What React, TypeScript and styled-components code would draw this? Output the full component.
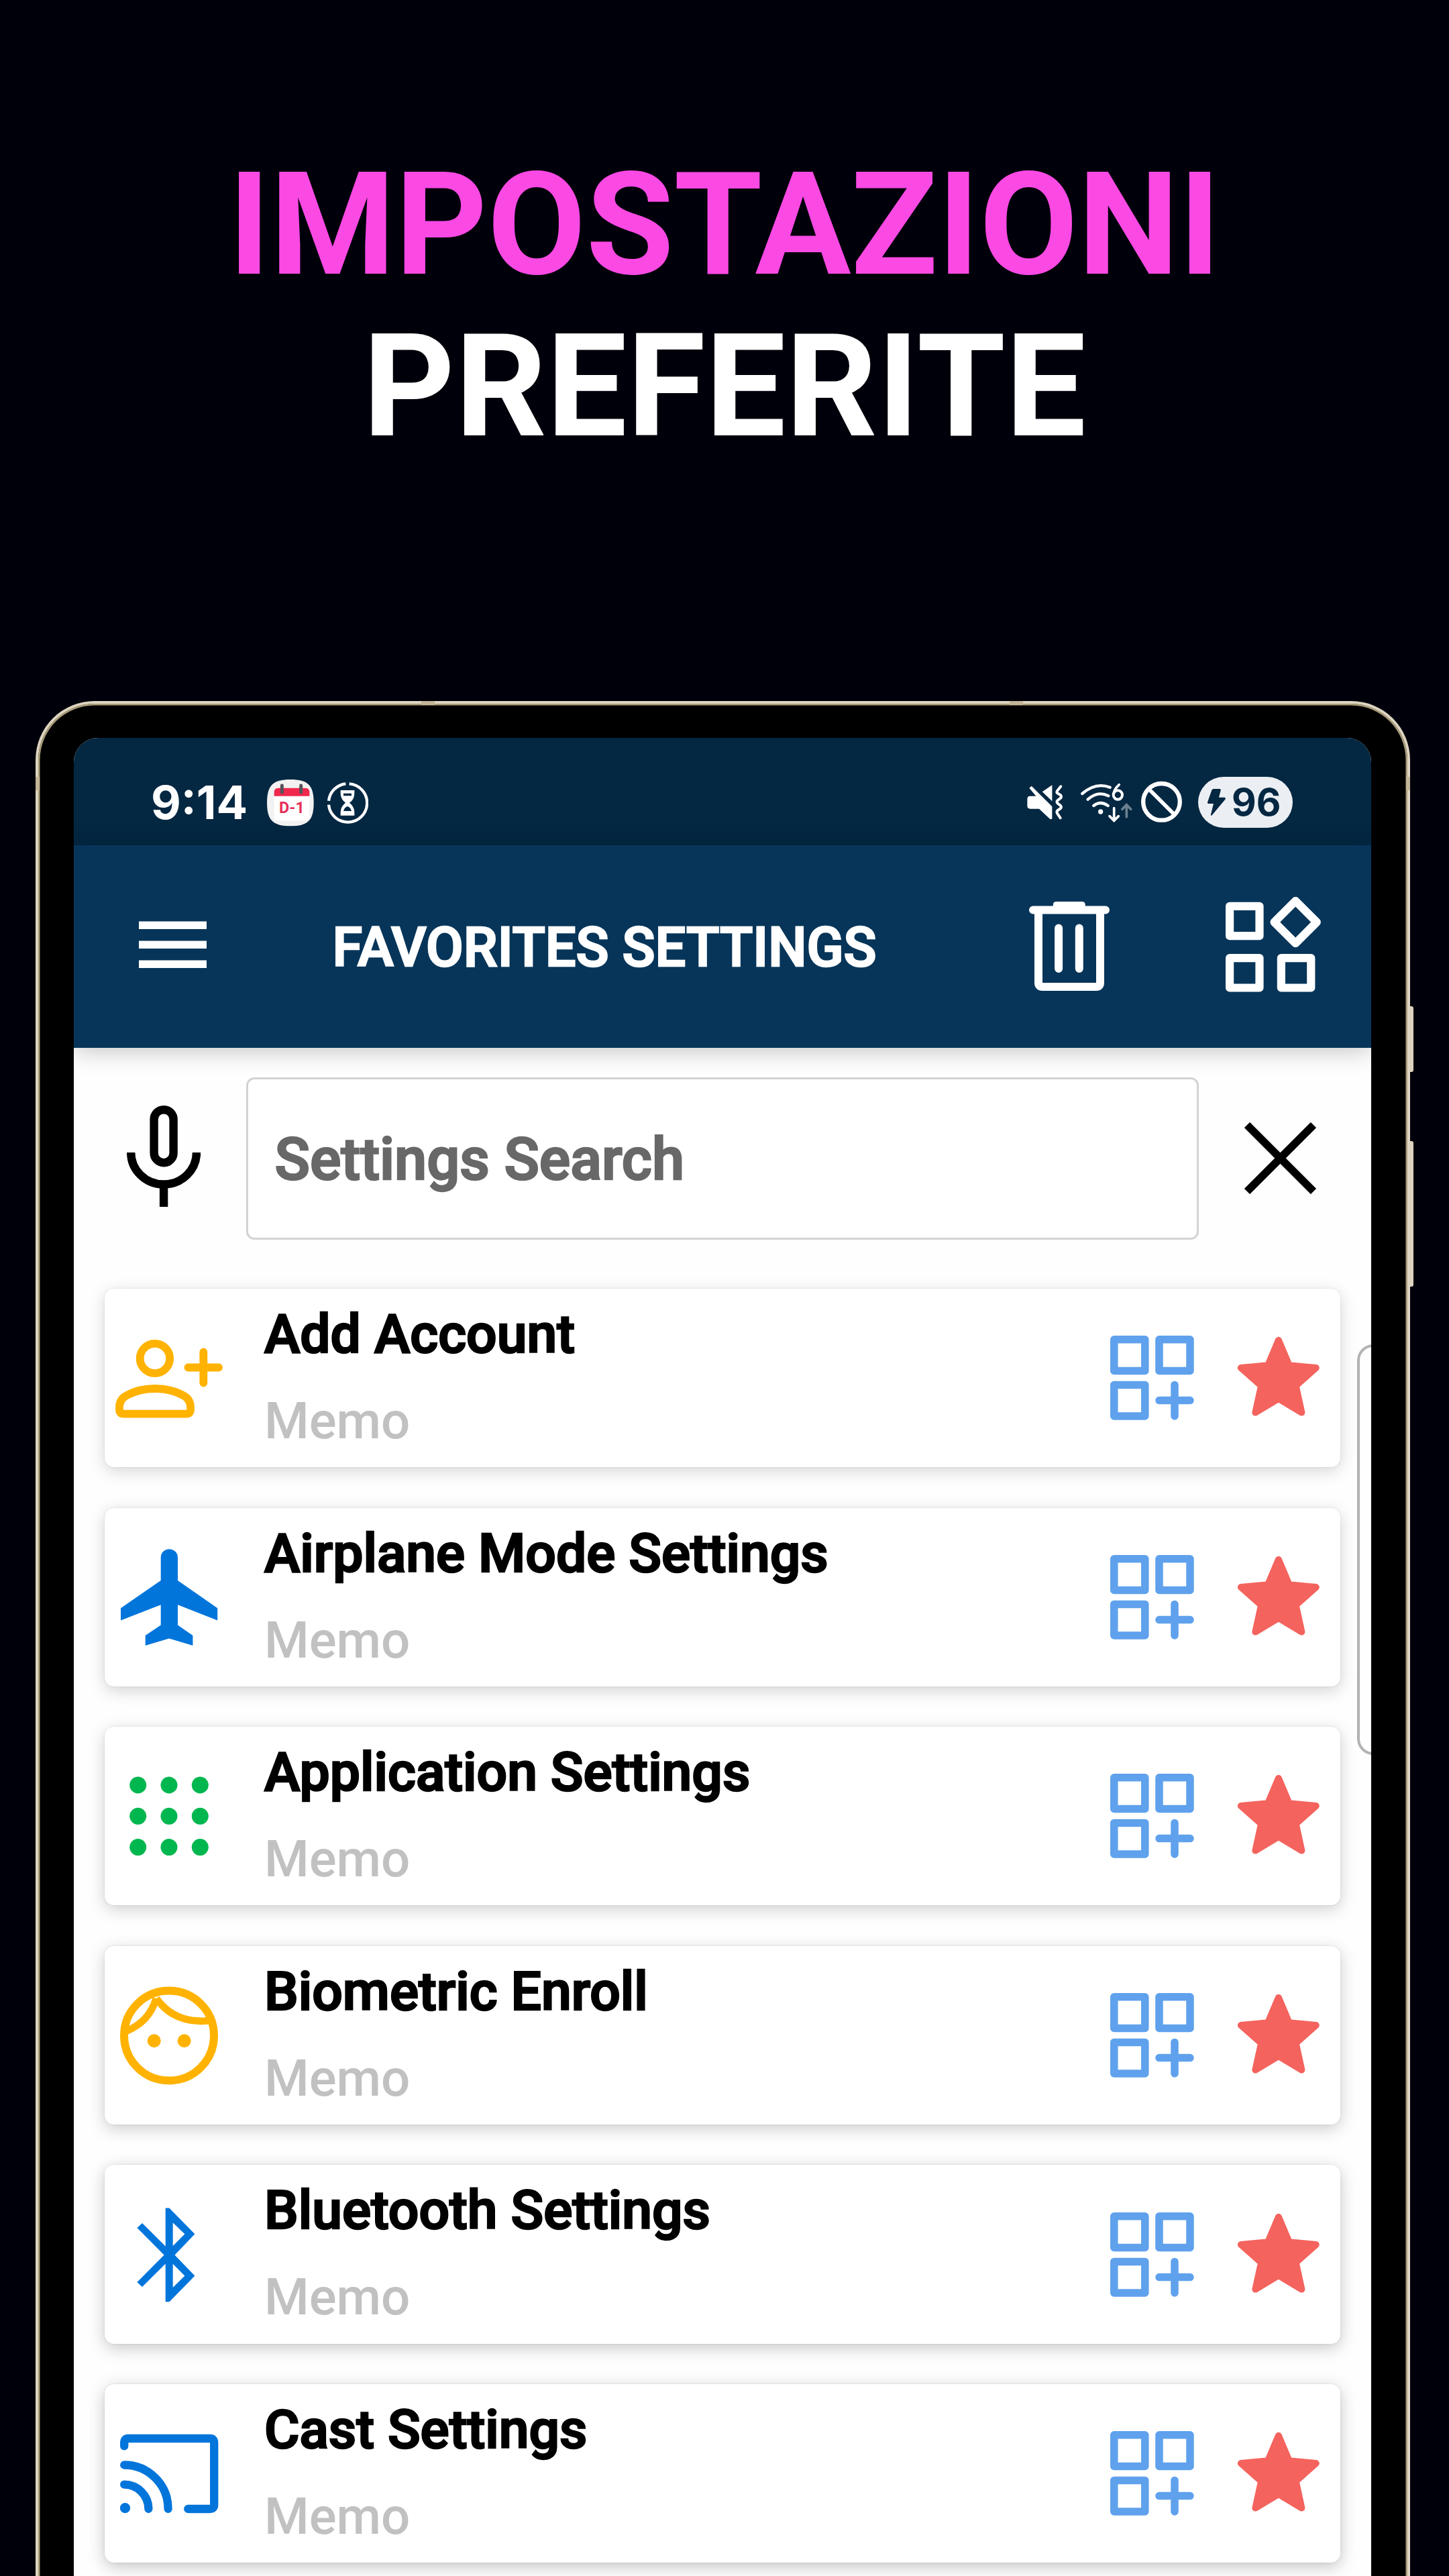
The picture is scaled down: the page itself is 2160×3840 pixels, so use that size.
import type { ReactNode } from 'react';
import { createGlobalStyle, styled } from 'styled-components';

const GlobalStyle = createGlobalStyle`
  * {
    box-sizing: border-box;
  }

  body {
    margin: 0;
    background: #00000b;
    font-family: Roboto, 'Noto Sans', sans-serif;
  }

  svg {
    display: block;
    flex: none;
  }
`;

const Page = styled.main`
  display: flex;
  flex-direction: column;
  width: 2160px;
  height: 3840px;
  overflow: hidden;
`;

const Hero = styled.h1`
  flex: none;
  height: 1045px;
  margin: 0;
  padding-top: 215px;
  color: #fff;
  font-size: 213px;
  font-weight: 700;
  line-height: 241px;
  text-align: center;
`;

const HeroLine = styled.span<{ $color?: string }>`
  display: block;
  color: ${({ $color }) => $color ?? 'inherit'};
`;

const Phone = styled.section`
  position: relative;
  flex: none;
  width: 2049px;
  height: 2900px;
  margin-left: 53px;
  padding: 51px 54px 0 53px;
  border: 4px solid #ddd5c0;
  border-bottom: 0;
  border-radius: 88px 88px 0 0;
  background: #000;
  box-shadow: inset 0 0 0 2.5px #aa9c79;
`;

const SideButton = styled.i<{ $top: number; $height: number }>`
  position: absolute;
  top: ${({ $top }) => $top}px;
  right: -9px;
  width: 5px;
  height: ${({ $height }) => $height}px;
  border-radius: 0 3px 3px 0;
  background: #ddd3bf;
`;

const Antenna = styled.i<{ $side: 'left' | 'right' | 'top'; $offset: number }>`
  position: absolute;
  ${({ $side }) => $side}: -4px;
  ${({ $side, $offset }) => ($side === 'top' ? `left: ${$offset}px` : `top: ${$offset}px`)};
  width: ${({ $side }) => ($side === 'top' ? 20 : 6)}px;
  height: ${({ $side }) => ($side === 'top' ? 6 : 20)}px;
  background: #c3b597;
`;

const Screen = styled.div`
  position: relative;
  height: 100%;
  border-radius: 36px 36px 0 0;
  background: #fefefe;
  overflow: hidden;
`;

const StatusBar = styled.div`
  display: flex;
  align-items: center;
  justify-content: space-between;
  height: 160px;
  padding: 31px 117px 0 115px;
  background: #042742;
`;

const StatusGroup = styled.div<{ $gap: number }>`
  display: flex;
  align-items: center;
  gap: ${({ $gap }) => $gap}px;
`;

const Clock = styled.span`
  width: 153.5px;
  color: #fff;
  font-family: Inter, sans-serif;
  font-size: 69px;
  font-weight: 700;
  line-height: 76px;
  white-space: nowrap;
`;

const Battery = styled.span`
  display: flex;
  align-items: center;
  width: 141px;
  height: 76px;
  margin-left: 10px;
  padding-left: 14px;
  gap: 9px;
  border-radius: 38px;
  background: #ebeff3;
  color: #042742;
  font-family: Inter, sans-serif;
  font-size: 56.5px;
  font-weight: 700;
`;

const AppBar = styled.header`
  position: relative;
  display: flex;
  align-items: center;
  height: 301.5px;
  padding: 0 75px 5px 97px;
  background: #073559;
  box-shadow: 0 4px 34px rgba(0, 0, 0, 0.24);
`;

const AppTitle = styled.h2`
  flex: 1;
  margin: 0;
  padding: 8px 0 0 187.5px;
  color: #fff;
  font-size: 80.9px;
  font-weight: 500;
  white-space: nowrap;
  -webkit-text-stroke: 2.6px currentColor;
`;

const AppActions = styled.div`
  display: flex;
  align-items: center;
  gap: 173px;
`;

const SearchRow = styled.div`
  display: flex;
  align-items: center;
  height: 330px;
  padding: 0 82px 0 79px;
`;

const SearchField = styled.div`
  flex: none;
  display: flex;
  align-items: center;
  width: 1420px;
  height: 242px;
  margin: 0 68px;
  padding: 3px 0 0 39.5px;
  border: 3px solid #d3d3d3;
  border-radius: 12px;
  background: #fff;
  color: #686868;
  font-size: 86.6px;
  font-weight: 500;
  -webkit-text-stroke: 2.6px currentColor;
`;

const List = styled.ul`
  display: flex;
  flex-direction: column;
  gap: 60.3px;
  margin: 0;
  padding: 29.5px 46px 0;
  list-style: none;
`;

const Card = styled.li<{ $shade: number }>`
  display: flex;
  align-items: center;
  height: 266.3px;
  padding: 0 30px 0 16px;
  border-radius: 14px;
  background: #fff;
  box-shadow:
    0 6px 24px rgba(0, 0, 0, ${({ $shade }) => $shade}),
    0 0 3px rgba(0, 0, 0, 0.1);
`;

const CardText = styled.div`
  flex: 1;
  height: 100%;
  padding: 8px 0 0 62px;
  white-space: nowrap;
`;

const CardTitle = styled.div`
  color: #000;
  font-size: 80.4px;
  font-weight: 500;
  line-height: 120px;
  -webkit-text-stroke: 2.6px currentColor;
`;

const Memo = styled.div`
  margin-top: 9px;
  color: #c1c1c1;
  font-size: 76.3px;
  font-weight: 500;
  line-height: 120px;
`;

const CardActions = styled.div`
  display: flex;
  align-items: center;
  gap: 64px;
`;

const EdgeHandle = styled.i`
  position: absolute;
  top: 904px;
  right: -40px;
  width: 61px;
  height: 612px;
  border: 4px solid #b2b2b2;
  border-radius: 24px;
  background: #fefefe;
`;

const MenuIcon = () => (
  <svg width="101" height="70" viewBox="0 -0.5 101 70" fill="#fff">
    <path d="M0 0h101v11.6H0zM0 29h101v11.6H0zM0 58h101v11.6H0z" />
  </svg>
);

const TrashIcon = () => (
  <svg width="120" height="138" viewBox="0 -5 120 138" fill="none" stroke="#fff" strokeWidth="12" strokeLinecap="round">
    <path d="M6 12.5h108M14 14v107q0 6 6 6h80q6 0 6-6V14" />
    <path d="M44.1 39.5V100M74.8 39.5V100" />
    <path d="M35.8 10V5q0-5 5-5h38q5 0 5 5v5z" fill="#fff" stroke="none" />
  </svg>
);

const WidgetsIcon = () => (
  <svg width="142" height="142" viewBox="0 0 142 142" fill="none" stroke="#fff" strokeWidth="12.2" strokeLinejoin="round">
    <path d="M6.1 13.8h44.4v44.4H6.1zM6.1 91.1h44.4v44.4H6.1zM82.9 91.1h44.4v44.4H82.9z" />
    <path d="M104.2 6 135.8 37.6 104.2 69.2 72.6 37.6z" />
  </svg>
);

const MicIcon = () => (
  <svg width="110" height="158" viewBox="0 0 110 158" fill="none" stroke="#000" strokeWidth="12.4">
    <rect x="40.6" y="6.2" width="29" height="79" rx="14.5" />
    <path d="M6.2 70a48.9 47.5 0 0 0 97.8 0M55.1 117v34" />
  </svg>
);

const CloseIcon = () => (
  <svg width="107" height="107" viewBox="0 0 107 107" stroke="#000" strokeWidth="11.6">
    <path d="m4 4 99 99M103 4 4 103" />
  </svg>
);

const AddWidgetIcon = () => (
  <svg width="125" height="126" viewBox="0 0 125 126" fill="none" stroke="#5fa1ec" strokeWidth="11.5">
    <path
      d="M5.8 5.8h46v46.6h-46zM73 5.8h46v46.6H73zM5.8 73.4h46V120h-46z"
      strokeLinejoin="round"
    />
    <path d="M96 73.4V120M73 96.6h46" strokeLinecap="round" />
  </svg>
);

const StarIcon = () => (
  <svg width="124" height="124" viewBox="0 0 124 124" fill="#f4635d" stroke="#f4635d" strokeWidth="10" strokeLinejoin="round">
    <path d="M61.9 5.8 77.7 43.2 117.8 47.1 87.7 73.8 96.4 113.6 61.9 92.9 27.4 113.6 36.1 73.8 5.9 47.1 46.1 43.2z" />
  </svg>
);

/* 160x160 leading icons of the cards */
const RowIcon = ({ children }: { children: ReactNode }) => (
  <svg width="160" height="160" viewBox="0 0 160 160" fill="none">
    {children}
  </svg>
);

const AddAccountIcon = () => (
  <RowIcon>
    <g stroke="#ffb300" strokeWidth="11.8" strokeLinecap="round">
      <circle cx="58.9" cy="51" r="22.2" />
      <path d="M12 133.6h94q6 0 6-6V124c0-9-4-14.500-11-18-13-7-28-10-42-10s-29 3-42 10c-7 3.500-11 9-11 18v3.600q0 6 6 6z" />
      <path d="M131.3 41.5v46M108.500 64.500h45.500" />
    </g>
  </RowIcon>
);

const AirplaneIcon = () => (
  <RowIcon>
    <path
      fill="#0275db"
      d="M67.7 20.8a12.65 12.65 0 0 1 25.3 0V55l59.2 41.2v18.3L93 91.3v30.2l22.4 15.6V152L80 141.5 44.7 152v-14.9l23-15.6V91.3L8 114.5V96.2L67.7 55z"
    />
  </RowIcon>
);

const AppsIcon = () => (
  <RowIcon>
    <g fill="#00b74f">
      {[34, 80.3, 126.6].map((y) =>
        [33.7, 80, 126.3].map((x) => <circle key={`${x}-${y}`} cx={x} cy={y} r="12.5" />),
      )}
    </g>
  </RowIcon>
);

const FaceIcon = () => (
  <RowIcon>
    <g stroke="#ffb300" strokeWidth="12">
      <circle cx="80" cy="80.5" r="67" />
      <path d="M17 73.5Q51 59 60.8 25M61 25Q89 64 141 58" strokeWidth="10.8" />
    </g>
    <circle cx="57.7" cy="88.3" r="10" fill="#ffb300" />
    <circle cx="102.7" cy="88.3" r="10" fill="#ffb300" />
  </RowIcon>
);

const BluetoothIcon = () => (
  <RowIcon>
    <path
      fill="#0275db"
      fillRule="evenodd"
      d="M118.4 49.3 80.500 10.600h-5.800v57L40 32.900l-7.600 7L72.600 80.500l-40.200 40.400 7.600 7.200 34.700-34.700v56.900h5.800l37.900-38.700L88.500 80.500zM85.700 32.300l17.700 17-17.700 17.600zM85.700 93.800l17.700 17.800-17.700 17.300z"
    />
  </RowIcon>
);

const CastIcon = () => (
  <RowIcon>
    <g stroke="#0275db" strokeWidth="12.3" strokeLinecap="round">
      <path d="M13.2 39.3V34q0-6 6-6h122q6 0 6 6v93q0 6-6 6h-33" />
      <path d="M13.2 67.5A65.5 65.5 0 0 1 78.6 133M13.2 96.7A36.3 36.3 0 0 1 49.4 133" />
    </g>
    <circle cx="14.5" cy="131.7" r="7.6" fill="#0275db" />
  </RowIcon>
);

const CalendarBadge = () => (
  <svg width="70" height="76" viewBox="563 53 210 228">
    <path d="M668 65c78 0 104 26 104 104s-26 104-104 104-105-26-105-104 27-104 105-104z" fill="#f2f2f2" />
    <path d="M595 138h158v95q0 16-16 16H611q-16 0-16-16z" fill="#fff" />
    <path d="M595 139v-18q0-18 18-18h122q18 0 18 18v18z" fill="#f0284d" />
    <path d="M630 92v30M715 92v30" stroke="#56525a" strokeWidth="15" strokeLinecap="round" />
    <text x="674" y="215" fill="#e5305a" fontFamily="Roboto, sans-serif" fontSize="70" fontWeight="700" textAnchor="middle">
      D-1
    </text>
  </svg>
);

const HourglassIcon = () => (
  <svg width="62" height="76" viewBox="828 53 186 228" fill="none" stroke="#fff" strokeWidth="13">
    <path d="M929 84a86 86 0 1 1-92 94M837 160a86 86 0 0 1 76-76" />
    <path
      d="M890 113h62v14q0 26-22 42 22 18 22 42v15h-62v-15q0-24 22-42-22-16-22-42zM903 127v11h36v-11zM903 206h36q-4-17-18-21-14 4-18 21z"
      fill="#fff"
      fillRule="evenodd"
      stroke="none"
    />
  </svg>
);

const MuteIcon = () => (
  <svg width="66.7" height="76" viewBox="62 53 200 228" fill="#fff">
    <path d="M174 90v72l-44-42z" />
    <path d="M72 103l10-9 92 92v54q-4 5-10 1l-48-45H76q-13 0-13-13v-31q0-13 13-13h26z" />
    <path
      d="m213 96-16 20q-4 6 1 10l14 9q5 6 1 12l-15 12q-5 6 0 12l14 11q5 6 0 12l-14 10q-5 6-1 12l14 21"
      fill="none"
      stroke="#fff"
      strokeWidth="12"
      strokeLinecap="round"
    />
  </svg>
);

const WifiIcon = () => (
  <svg width="77" height="76" viewBox="302 53 231 228" fill="none" stroke="#fff" strokeWidth="13" strokeLinecap="round">
    <path d="M309 128q60-52 124-28M334 154q44-40 92-16M360 182q30-24 64 0" />
    <circle cx="391" cy="209" r="11" fill="#fff" stroke="none" />
    <path d="M474 88q-22 20-24 38" strokeWidth="11" />
    <circle cx="468" cy="134" r="20" strokeWidth="12" />
    <path d="M451 193v52M431 229l20 20 20-20" strokeWidth="11" />
    <path d="M507 232v-52M488 198l19-20 19 20" stroke="#6c8091" strokeWidth="11" />
  </svg>
);

const BlockedIcon = () => (
  <svg width="61" height="76" viewBox="574 53 183 228" fill="none" stroke="#fff" strokeWidth="19">
    <circle cx="665.5" cy="165" r="82" />
    <path d="m608 107 115 115" strokeWidth="17" />
  </svg>
);

const BoltIcon = () => (
  <svg width="27" height="40" viewBox="870 105 81 120" fill="#042742">
    <path d="M895 105h30q6 1 4 7l-8 31h26q6 3 2 9l-59 71q-7 4-5-4l12-48h-23q-5-1-4-6l19-55z" />
  </svg>
);

const settings = [
  { title: 'Add Account', icon: <AddAccountIcon /> },
  { title: 'Airplane Mode Settings', icon: <AirplaneIcon /> },
  { title: 'Application Settings', icon: <AppsIcon /> },
  { title: 'Biometric Enroll', icon: <FaceIcon /> },
  { title: 'Bluetooth Settings', icon: <BluetoothIcon /> },
  { title: 'Cast Settings', icon: <CastIcon /> },
];

const App = () => (
  <>
    <GlobalStyle />
    <Page>
      <Hero>
        <HeroLine $color="#fb49e4">IMPOSTAZIONI</HeroLine>
        <HeroLine>PREFERITE</HeroLine>
      </Hero>
      <Phone>
        <Antenna $side="top" $offset={571} />
        <Antenna $side="top" $offset={1448} />
        <Antenna $side="left" $offset={109} />
        <Antenna $side="right" $offset={109} />
        <SideButton $top={451} $height={98} />
        <SideButton $top={652} $height={217} />
        <Screen>
          <StatusBar>
            <StatusGroup $gap={19}>
              <Clock>9:14</Clock>
              <CalendarBadge />
              <HourglassIcon />
            </StatusGroup>
            <StatusGroup $gap={13.6}>
              <MuteIcon />
              <WifiIcon />
              <BlockedIcon />
              <Battery>
                <BoltIcon />
                96
              </Battery>
            </StatusGroup>
          </StatusBar>
          <AppBar>
            <MenuIcon />
            <AppTitle>FAVORITES SETTINGS</AppTitle>
            <AppActions>
              <TrashIcon />
              <WidgetsIcon />
            </AppActions>
          </AppBar>
          <SearchRow>
            <MicIcon />
            <SearchField>Settings Search</SearchField>
            <CloseIcon />
          </SearchRow>
          <List>
            {settings.map(({ title, icon }, index) => (
              <Card key={title} $shade={0.16 + index * 0.015}>
                {icon}
                <CardText>
                  <CardTitle>{title}</CardTitle>
                  <Memo>Memo</Memo>
                </CardText>
                <CardActions>
                  <AddWidgetIcon />
                  <StarIcon />
                </CardActions>
              </Card>
            ))}
          </List>
          <EdgeHandle />
        </Screen>
      </Phone>
    </Page>
  </>
);

export default App;
